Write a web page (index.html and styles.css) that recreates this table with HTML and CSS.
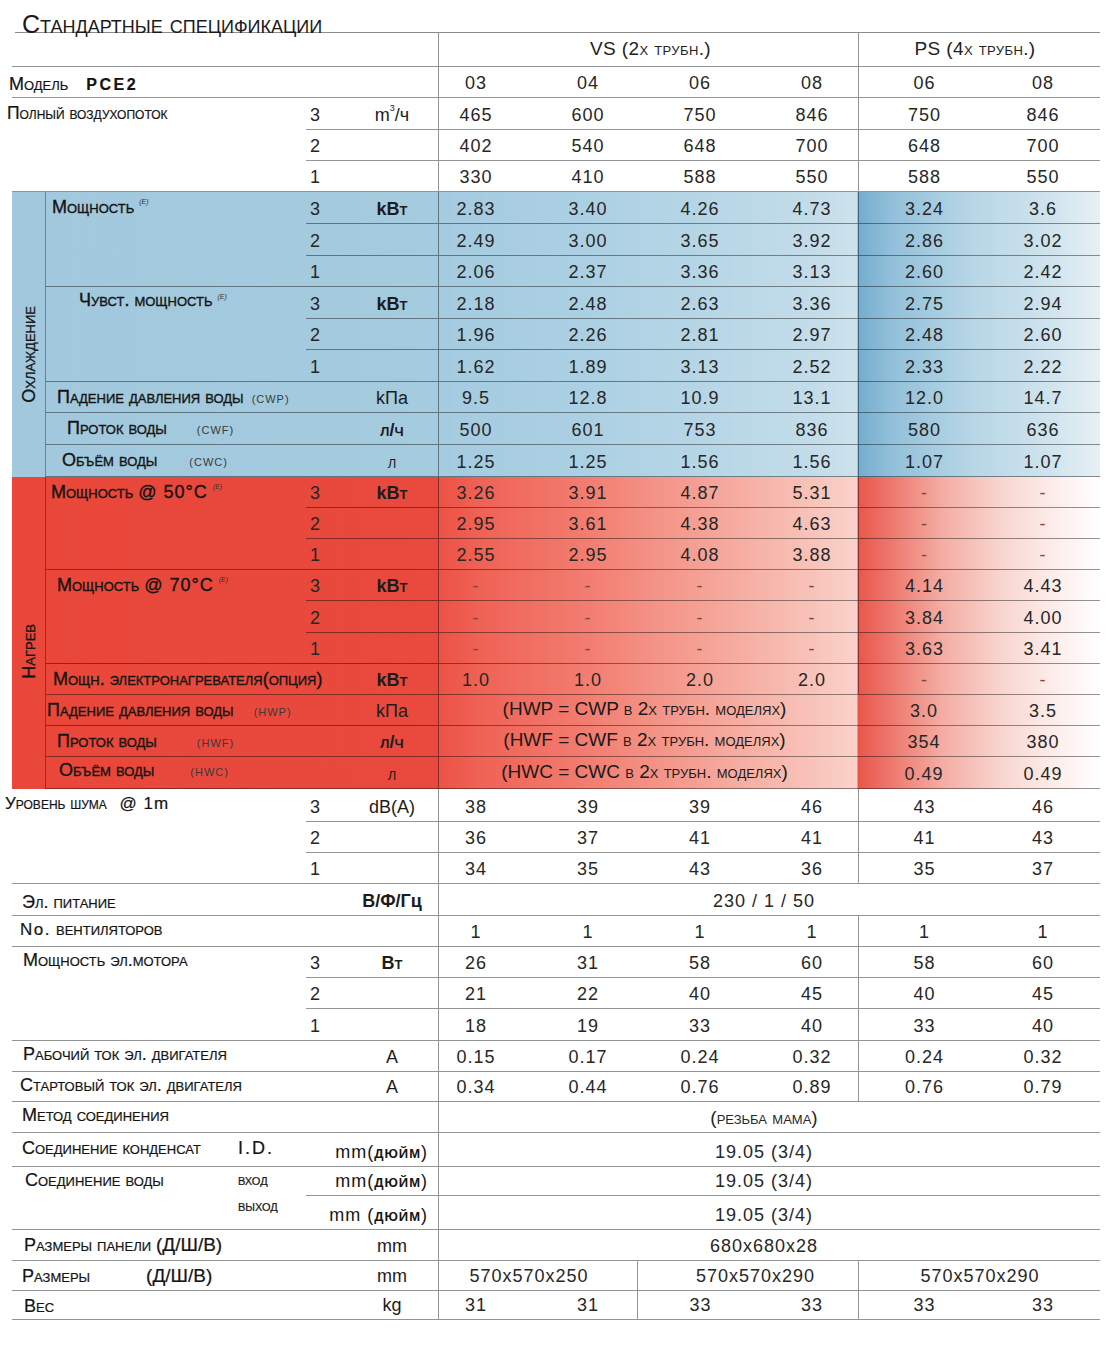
FILE: index.html
```html
<!DOCTYPE html>
<html lang="ru">
<head>
<meta charset="utf-8">
<title>Стандартные спецификации</title>
<link rel="stylesheet" href="styles.css">
</head>
<body>
<div class="sheet">
  <h1 class="title">Стандартные спецификации</h1>

  <div class="blk hdr">
    <div class="lab outw"></div>
    <div class="vals hv">
      <span class="vs">VS (2<span class="sc"> х трубн.)</span></span>
      <span class="ps">PS (4<span class="sc">х трубн.)</span></span>
    </div>
    <div class="lab outw pm3"><span class="sc">Модель</span><b class="pce">PCE2</b></div>
    <div class="vals v6"><span>03</span><span>04</span><span>06</span><span>08</span><span>06</span><span>08</span></div>
  </div>

  <div class="blk">
    <div class="lab out g3 pm5 air"><span class="sc">Полный воздухопоток</span></div>
    <div class="lv">3</div><div class="un">m<sup class="cube">3</sup>/ч</div>
    <div class="vals v6"><span>465</span><span>600</span><span>750</span><span>846</span><span>750</span><span>846</span></div>
    <div class="lv">2</div><div class="un"></div>
    <div class="vals v6"><span>402</span><span>540</span><span>648</span><span>700</span><span>648</span><span>700</span></div>
    <div class="lv">1</div><div class="un"></div>
    <div class="vals v6"><span>330</span><span>410</span><span>588</span><span>550</span><span>588</span><span>550</span></div>
  </div>

  <div class="blk sec cool">
    <div class="side"><span class="vt cool-vt">Охлаждение</span></div>
    <div class="lab in g3 p6">Мощность<sup class="e">(E)</sup></div>
    <div class="lv">3</div><div class="un b">k<span class="sc">Вт</span></div>
    <div class="vals v6"><span>2.83</span><span>3.40</span><span>4.26</span><span>4.73</span><span>3.24</span><span>3.6</span></div>
    <div class="lv">2</div><div class="un"></div>
    <div class="vals v6"><span>2.49</span><span>3.00</span><span>3.65</span><span>3.92</span><span>2.86</span><span>3.02</span></div>
    <div class="lv">1</div><div class="un"></div>
    <div class="vals v6"><span>2.06</span><span>2.37</span><span>3.36</span><span>3.13</span><span>2.60</span><span>2.42</span></div>

    <div class="lab in g3 p33 hi">Чувст. мощность<sup class="e">(E)</sup></div>
    <div class="lv">3</div><div class="un b">k<span class="sc">Вт</span></div>
    <div class="vals v6"><span>2.18</span><span>2.48</span><span>2.63</span><span>3.36</span><span>2.75</span><span>2.94</span></div>
    <div class="lv">2</div><div class="un"></div>
    <div class="vals v6"><span>1.96</span><span>2.26</span><span>2.81</span><span>2.97</span><span>2.48</span><span>2.60</span></div>
    <div class="lv">1</div><div class="un"></div>
    <div class="vals v6"><span>1.62</span><span>1.89</span><span>3.13</span><span>2.52</span><span>2.33</span><span>2.22</span></div>

    <div class="lab inw p11">Падение давления воды<small class="tag m8">(CWP)</small></div>
    <div class="un">kПа</div>
    <div class="vals v6"><span>9.5</span><span>12.8</span><span>10.9</span><span>13.1</span><span>12.0</span><span>14.7</span></div>
    <div class="lab inw p21">Проток воды<small class="tag m30">(CWF)</small></div>
    <div class="un sc b">л/ч</div>
    <div class="vals v6"><span>500</span><span>601</span><span>753</span><span>836</span><span>580</span><span>636</span></div>
    <div class="lab inw p16">Объём воды<small class="tag m32">(CWC)</small></div>
    <div class="un sc">л</div>
    <div class="vals v6"><span>1.25</span><span>1.25</span><span>1.56</span><span>1.56</span><span>1.07</span><span>1.07</span></div>
  </div>

  <div class="blk sec heat">
    <div class="side"><span class="vt heat-vt">Нагрев</span></div>
    <div class="lab in g3 p5">Мощность <span class="nv deg">@ 50°C</span><sup class="e">(E)</sup></div>
    <div class="lv">3</div><div class="un b">k<span class="sc">Вт</span></div>
    <div class="vals v6"><span>3.26</span><span>3.91</span><span>4.87</span><span>5.31</span><span class="d">-</span><span class="d">-</span></div>
    <div class="lv">2</div><div class="un"></div>
    <div class="vals v6"><span>2.95</span><span>3.61</span><span>4.38</span><span>4.63</span><span class="d">-</span><span class="d">-</span></div>
    <div class="lv">1</div><div class="un"></div>
    <div class="vals v6"><span>2.55</span><span>2.95</span><span>4.08</span><span>3.88</span><span class="d">-</span><span class="d">-</span></div>

    <div class="lab in g3 p11">Мощность <span class="nv deg">@ 70°C</span><sup class="e">(E)</sup></div>
    <div class="lv">3</div><div class="un b">k<span class="sc">Вт</span></div>
    <div class="vals v6"><span class="d">-</span><span class="d">-</span><span class="d">-</span><span class="d">-</span><span>4.14</span><span>4.43</span></div>
    <div class="lv">2</div><div class="un"></div>
    <div class="vals v6"><span class="d">-</span><span class="d">-</span><span class="d">-</span><span class="d">-</span><span>3.84</span><span>4.00</span></div>
    <div class="lv">1</div><div class="un"></div>
    <div class="vals v6"><span class="d">-</span><span class="d">-</span><span class="d">-</span><span class="d">-</span><span>3.63</span><span>3.41</span></div>

    <div class="lab inw p7">Мощн. электронагревателя(опция)</div>
    <div class="un b">k<span class="sc">Вт</span></div>
    <div class="vals v6"><span>1.0</span><span>1.0</span><span>2.0</span><span>2.0</span><span class="d">-</span><span class="d">-</span></div>
    <div class="lab inw p1">Падение давления воды<small class="tag m20">(HWP)</small></div>
    <div class="un">kПа</div>
    <div class="vals mix"><span class="note">(HWP = CWP в 2х трубн. моделях)</span><span class="c5">3.0</span><span class="c6">3.5</span></div>
    <div class="lab inw p11">Проток воды<small class="tag m40">(HWF)</small></div>
    <div class="un sc b">л/ч</div>
    <div class="vals mix"><span class="note">(HWF = CWF в 2х трубн. моделях)</span><span class="c5">354</span><span class="c6">380</span></div>
    <div class="lab inw p13 hi">Объём воды<small class="tag m36">(HWC)</small></div>
    <div class="un sc">л</div>
    <div class="vals mix"><span class="note">(HWC = CWC в 2х трубн. моделях)</span><span class="c5">0.49</span><span class="c6">0.49</span></div>
  </div>

  <div class="blk low">
    <div class="lab out g3 pm7 noise"><span class="sc">Уровень шума</span> <span class="nv at">@ 1m</span></div>
    <div class="lv">3</div><div class="un">dB(A)</div>
    <div class="vals v6"><span>38</span><span>39</span><span>39</span><span>46</span><span>43</span><span>46</span></div>
    <div class="lv">2</div><div class="un"></div>
    <div class="vals v6"><span>36</span><span>37</span><span>41</span><span>41</span><span>41</span><span>43</span></div>
    <div class="lv">1</div><div class="un"></div>
    <div class="vals v6"><span>34</span><span>35</span><span>43</span><span>36</span><span>35</span><span>37</span></div>

    <div class="lab out3 p10 dn">Эл. питание</div>
    <div class="un b">В/Ф/Гц</div>
    <div class="vals"><span class="full">230 / 1 / 50</span></div>

    <div class="lab outw p8 hi"><span class="nv no">No.</span> вентиляторов</div>
    <div class="vals v6"><span>1</span><span>1</span><span>1</span><span>1</span><span>1</span><span>1</span></div>

    <div class="lab out g3 p11 hi">Мощность эл.мотора</div>
    <div class="lv">3</div><div class="un b">В<span class="sc">т</span></div>
    <div class="vals v6"><span>26</span><span>31</span><span>58</span><span>60</span><span>58</span><span>60</span></div>
    <div class="lv">2</div><div class="un"></div>
    <div class="vals v6"><span>21</span><span>22</span><span>40</span><span>45</span><span>40</span><span>45</span></div>
    <div class="lv">1</div><div class="un"></div>
    <div class="vals v6"><span>18</span><span>19</span><span>33</span><span>40</span><span>33</span><span>40</span></div>

    <div class="lab out3 p11 hi">Рабочий ток эл. двигателя</div>
    <div class="un">A</div>
    <div class="vals v6"><span>0.15</span><span>0.17</span><span>0.24</span><span>0.32</span><span>0.24</span><span>0.32</span></div>

    <div class="lab out3 p8 hi">Стартовый ток эл. двигателя</div>
    <div class="un">A</div>
    <div class="vals v6"><span>0.34</span><span>0.44</span><span>0.76</span><span>0.89</span><span>0.76</span><span>0.79</span></div>

    <div class="lab outw p10 hi">Метод соединения</div>
    <div class="vals"><span class="full sc method">(резьба мама)</span></div>

    <div class="lab out split"><span class="p10">Соединение конденсат</span><span class="nv id">I.D.</span></div>
    <div class="unw">mm(<span class="sc b">дюйм</span>)</div>
    <div class="vals"><span class="full">19.05 (3/4)</span></div>

    <div class="lab out g2 split hi"><span class="p13">Соединение воды</span><span class="inout"><span>вход</span><span>выход</span></span></div>
    <div class="unw">mm(<span class="sc b">дюйм</span>)</div>
    <div class="vals"><span class="full">19.05 (3/4)</span></div>
    <div class="unw">mm ( <span class="sc b">дюйм</span>)</div>
    <div class="vals"><span class="full">19.05 (3/4)</span></div>

    <div class="lab out3 p12">Размеры панели <span class="nv dim">(Д/Ш/В)</span></div>
    <div class="un">mm</div>
    <div class="vals"><span class="full">680x680x28</span></div>

    <div class="lab out3 p10">Размеры<span class="nv dim m56">(Д/Ш/В)</span></div>
    <div class="un">mm</div>
    <div class="vals dims"><span class="dA">570x570x250</span><span class="dB">570x570x290</span><span class="dC">570x570x290</span></div>

    <div class="lab out3 p12">Вес</div>
    <div class="un">kg</div>
    <div class="vals v6 wt"><span>31</span><span>31</span><span>33</span><span>33</span><span>33</span><span>33</span></div>
  </div>
</div>
</body>
</html>
```

FILE: styles.css
```css
* { box-sizing: border-box; margin: 0; padding: 0; }

body {
  background: #ffffff;
  font-family: "Liberation Sans", Arial, sans-serif;
  color: #161616;
}

.sheet {
  width: 1100px;
  padding-bottom: 26px;
  --ln: rgba(0, 0, 0, 0.42);
}

.title {
  margin-left: 15px;
  height: 33px;
  padding: 14px 0 0 7px;
  line-height: 20px;
  font-size: 25px;
  font-weight: normal;
  font-variant: small-caps;
  color: #1a1a1a;
  border-bottom: 1px solid #8c8c8c;
}

.blk {
  display: grid;
  grid-template-columns: 46px 260px 32px 100px 662px;
  grid-auto-rows: 31.33px;
  font-size: 18px;
}

.hdr { grid-template-rows: 34px 31.33px; }
.low { grid-template-rows: 33px 31px 31px 32px 31px 31px 31px 32px 31px 30px 31px 34px 29px 34px 31px 30px 29px; }

.sec {
  margin-left: 12px;
  grid-template-columns: 34px 260px 32px 100px 662px;
}

.cool {
  grid-template-rows: repeat(9, 31.6px);
  background: linear-gradient(90deg, #a2c8dd 0, #a5cbdf 426px, #a4cbe0 427px, #acd0e3 575px, #b6d6e6 690px, #c3dce9 800px, #cde2ed 845px, #74adcf 846px, #92c0da 880px, #b7d6e6 960px, #d0e4ee 1040px, #e7f0f4 1088px);
}

.heat {
  grid-template-rows: repeat(10, 31.2px);
  background: linear-gradient(90deg, #e8473a 0, #e94a3d 426px, #ec5245 427px, #ef6356 470px, #f27d70 575px, #f5a195 690px, #f8c3b9 800px, #fad2ca 845px, #e9564c 846px, #ef8378 890px, #f4aca3 930px, #f9d6d0 990px, #fdf0ed 1050px, #ffffff 1088px);
}

.blk > * {
  border-bottom: 1px solid var(--ln);
  line-height: 30px;
  white-space: nowrap;
}

/* label cells */
.lab {
  color: #141414;
  font-variant: small-caps;
  -webkit-text-stroke: 0.2px #141414;
}
.sec .lab { -webkit-text-stroke: 0.35px #141414; }
.out { grid-column: 1 / 3; margin-left: 12px; }
.out3 { grid-column: 1 / 4; margin-left: 12px; }
.outw { grid-column: 1 / 5; margin-left: 12px; }
.in { grid-column: 2; }
.inw { grid-column: 2 / 4; }
.g3 { grid-row: span 3; }
.g2 { grid-row: span 2; }
.air { font-size: 17.5px; }
.noise { font-size: 17px; line-height: 30px; }
.hi { line-height: 26px; }
.dn { line-height: 36px; }

.pm3 { text-indent: -3px; line-height: 34px; }
.pm5 { text-indent: -5px; }
.pm7 { text-indent: -7px; }
.p1 { padding-left: 1px; }
.p5 { padding-left: 5px; }
.p6 { padding-left: 6px; }
.p7 { padding-left: 7px; }
.p8 { padding-left: 8px; }
.p10 { padding-left: 10px; }
.p11 { padding-left: 11px; }
.p12 { padding-left: 12px; }
.p13 { padding-left: 13px; }
.p16 { padding-left: 16px; }
.p21 { padding-left: 21px; }
.p33 { padding-left: 33px; }

.pce {
  margin-left: 18px;
  font-variant: normal;
  font-size: 16px;
  letter-spacing: 2.5px;
  font-weight: bold;
}

.nv { font-variant: normal; }
.deg { letter-spacing: 1px; }
.at { letter-spacing: 1px; margin-left: 8px; }
.no { letter-spacing: 1.5px; font-size: 17px; }
.dim { font-size: 19px; }
.m56 { margin-left: 56px; }
.id { letter-spacing: 2px; }

.e {
  font-size: 7px;
  font-style: italic;
  font-variant: normal;
  vertical-align: top;
  line-height: 20px;
  margin-left: 5px;
  color: #333;
  -webkit-text-stroke: 0;
}

.tag {
  font-size: 11px;
  font-variant: normal;
  letter-spacing: 1px;
  color: #3a3a3a;
  -webkit-text-stroke: 0;
}
.m8 { margin-left: 8px; }
.m20 { margin-left: 20px; }
.m30 { margin-left: 30px; }
.m32 { margin-left: 32px; }
.m36 { margin-left: 36px; }
.m40 { margin-left: 40px; }

.split {
  display: grid;
  grid-template-columns: 226px 1fr;
}
.inout {
  display: flex;
  flex-direction: column;
  font-size: 16px;
  line-height: 26px;
  padding-top: 0;
}

/* level and unit */
.lv, .un, .unw {
  display: flex;
  align-items: flex-end;
  line-height: 26px;
  padding-bottom: 1px;
}
.lv {
  grid-column: 3;
  padding-left: 4px;
  color: #262626;
}
.un {
  grid-column: 4;
  justify-content: center;
  padding-left: 8px;
  color: #1c1c1c;
}
.unw {
  grid-column: 3 / 5;
  justify-content: flex-end;
  padding-right: 10px;
  letter-spacing: 1px;
}
.cube { font-size: 9px; line-height: 12px; align-self: flex-start; margin-top: 4px; }
.un .cube { margin-bottom: 14px; }
.sc { font-variant: small-caps; }
.b { font-weight: bold; }

/* values */
.vals {
  grid-column: 5;
  display: grid;
  grid-template-columns: 86px 112px 119px 102px 122px 121px;
  border-left: 1px solid var(--ln);
  color: #272727;
  letter-spacing: 1px;
}
.vals > span {
  display: flex;
  align-items: flex-end;
  justify-content: center;
  line-height: 26px;
  padding-bottom: 1px;
}
.v6 > :nth-child(1) { padding-right: 12px; }
.v6 > :nth-child(2) { padding-left: 14px; }
.v6 > :nth-child(3) { padding-left: 7px; }
.v6 > :nth-child(4) { padding-left: 10px; }
.v6 > :nth-child(5) { padding-left: 10px; border-left: 1px solid var(--ln); }
.v6 > :nth-child(6) { padding-left: 5px; }
.wt > :nth-child(3) { border-left: 1px solid var(--ln); }

.d { color: #7f463e; }

.hv { letter-spacing: 0.4px; font-size: 19px; color: #222; }
.hv .vs { grid-column: 1 / 5; padding-left: 4px; padding-bottom: 4px; }
.hv .ps { grid-column: 5 / 7; border-left: 1px solid var(--ln); padding-right: 10px; padding-bottom: 4px; }

.mix .note {
  grid-column: 1 / 5;
  font-variant: small-caps;
  font-size: 19px;
  letter-spacing: 0;
  color: #1a1a1a;
  padding-right: 8px;
  padding-bottom: 3px;
}
.mix .c5 { grid-column: 5; padding-left: 10px; }
.mix .c6 { grid-column: 6; padding-left: 5px; }

.full {
  grid-column: 1 / 7;
  padding-right: 12px;
}
.method { letter-spacing: 0; font-size: 19px; padding-bottom: 4px; }

.dims .dA { grid-column: 1 / 3; padding-right: 18px; }
.dims .dB { grid-column: 3 / 5; padding-left: 15px; border-left: 1px solid var(--ln); }
.dims .dC { grid-column: 5 / 7; border-left: 1px solid var(--ln); }

/* sidebars */
.side {
  grid-column: 1;
  grid-row: 1 / -1;
  border-right: 1px solid rgba(0, 0, 0, 0.35);
  border-bottom: none;
  display: flex;
  align-items: center;
  justify-content: center;
}
.vt {
  writing-mode: vertical-rl;
  transform: rotate(180deg);
  font-variant: small-caps;
  font-size: 18px;
  line-height: 20px;
  color: #151515;
  -webkit-text-stroke: 0.3px #151515;
}
.cool-vt { margin-top: 40px; }
.heat-vt { margin-top: 38px; }
```
